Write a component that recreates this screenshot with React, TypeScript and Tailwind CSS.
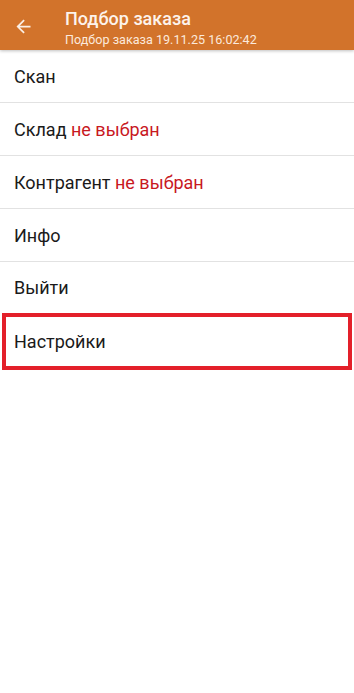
import React from "react";

const Row = ({ children, divider = true, h = "h-[53px]" }: { children: React.ReactNode; divider?: boolean; h?: string }) => (
  <div className={`${h} flex items-center pl-[14px] text-[18px] text-[#1a1a1a] ${divider ? "border-b-[1.5px] border-[#e2e2e2]" : ""}`}>
    {children}
  </div>
);

export default function App() {
  return (
    <div className="w-[354px] h-[693px] bg-white" style={{ fontFamily: "Roboto, 'Noto Sans', sans-serif" }}>
      <div className="h-[50px] bg-[#d2732b] flex items-center shadow-[0_1px_3px_rgba(0,0,0,0.25)] relative z-10">
        <div className="w-[64px] flex">
          <svg width="21" height="21" viewBox="0 0 24 24" className="ml-[13px] mt-[3px]">
            <path d="M20 11H7.83l5.59-5.59L12 4l-8 8 8 8 1.41-1.41L7.83 13H20v-2z" fill="#fbeee4" />
          </svg>
        </div>
        <div className="flex flex-col leading-none ml-[1px] mt-[6px]">
          <div className="text-[18px] font-medium text-[#fdf3ec]">Подбор заказа</div>
          <div className="text-[12.6px] text-[#fbe9dc] mt-[6px]">Подбор заказа 19.11.25 16:02:42</div>
        </div>
      </div>
      <Row>Скан</Row>
      <Row>
        Склад&nbsp;<span className="text-[#c8191f]">не выбран</span>
      </Row>
      <Row>
        Контрагент&nbsp;<span className="text-[#c8191f]">не выбран</span>
      </Row>
      <Row>Инфо</Row>
      <Row divider={false} h="h-[51px]">Выйти</Row>
      <div className="mx-[2px] h-[57px] border-[4px] border-[#e3202a] flex items-center pl-[8px] text-[18px] text-[#1a1a1a]">
        Настройки
      </div>
    </div>
  );
}
